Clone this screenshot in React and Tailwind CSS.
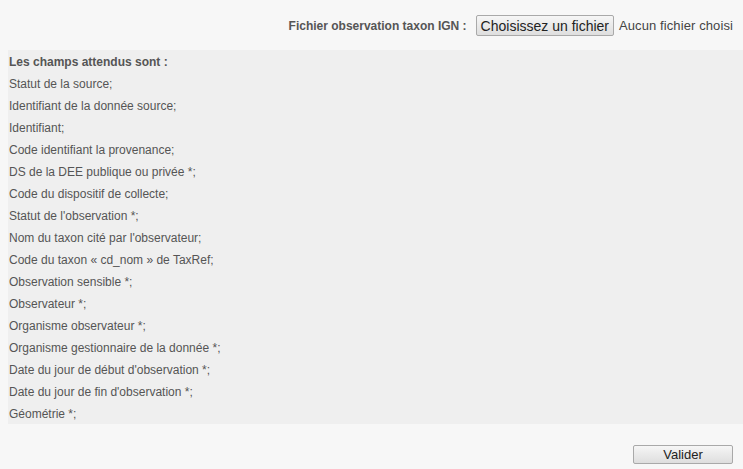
export default function App() {
  const fields = [
    "Statut de la source;",
    "Identifiant de la donnée source;",
    "Identifiant;",
    "Code identifiant la provenance;",
    "DS de la DEE publique ou privée *;",
    "Code du dispositif de collecte;",
    "Statut de l'observation *;",
    "Nom du taxon cité par l'observateur;",
    "Code du taxon « cd_nom » de TaxRef;",
    "Observation sensible *;",
    "Observateur *;",
    "Organisme observateur *;",
    "Organisme gestionnaire de la donnée *;",
    "Date du jour de début d'observation *;",
    "Date du jour de fin d'observation *;",
    "Géométrie *;",
  ];
  return (
    <div
      className="w-[743px] h-[469px] bg-[#f7f7f7] text-[#555555] text-[12px] overflow-hidden"
      style={{ fontFamily: '"Liberation Sans", Arial, sans-serif' }}
    >
      <div className="flex items-center justify-end h-[50px] pr-[10px] pt-[1px]">
        <span className="font-bold mr-[9px]">Fichier observation taxon IGN :</span>
        <span className="h-[21px] px-[4px] flex items-center border border-[#a9a9a9] rounded-[2px] bg-gradient-to-b from-[#f6f6f6] to-[#dedede] text-[#222] text-[14px] leading-none">
          Choisissez un fichier
        </span>
        <span className="ml-[5px] text-[13px] text-[#444] tracking-[0.1px]">Aucun fichier choisi</span>
      </div>
      <div className="ml-[8px] bg-[#efefef] h-[374px] pl-[1px] pt-[1px]">
        <div className="font-bold leading-[22px]">Les champs attendus sont :</div>
        {fields.map((f) => (
          <div key={f} className="leading-[22px]">{f}</div>
        ))}
      </div>
      <div className="flex justify-end pr-[10px] pt-[21px]">
        <span className="w-[100px] h-[19px] flex items-center justify-center border border-[#a9a9a9] rounded-[2px] bg-gradient-to-b from-[#f6f6f6] to-[#dedede] text-[#222] text-[13px] leading-none">
          Valider
        </span>
      </div>
    </div>
  );
}
